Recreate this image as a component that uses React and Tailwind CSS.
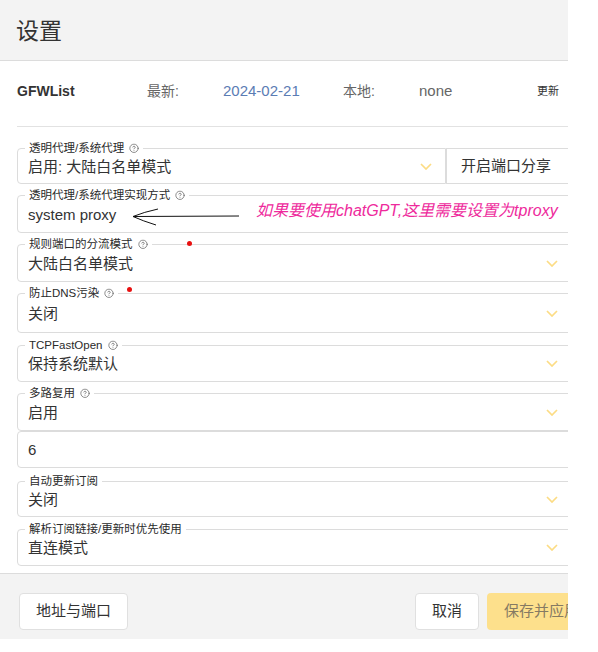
import React from "react";
import { CircleHelp } from "lucide-react";

function Chevron() {
  return (
    <svg width="12" height="7" viewBox="0 0 12 7" className="shrink-0">
      <path d="M1 1 L6 6 L11 1" stroke="#fcdc84" strokeWidth="1.7" fill="none" />
    </svg>
  );
}

function Label({ text, help }) {
  return (
    <div className="absolute left-[7px] top-0 -translate-y-[55%] bg-white px-[4px] flex items-center gap-[5px] text-[11.5px] leading-[14px] text-[#2a2a2a] whitespace-nowrap">
      <span>{text}</span>
      {help && <CircleHelp size={10} strokeWidth={1.6} color="#555" />}
    </div>
  );
}

function Field({ label, help = true, value, cls, chevron = true, children }) {
  return (
    <div className={`relative flex items-center justify-between border border-[#dcdcdc] rounded-[4px] pl-[10px] pr-[13px] bg-white ${cls}`}>
      {label && <Label text={label} help={help} />}
      <span className="text-[15px] text-[#333] leading-none">{value}</span>
      {chevron && <Chevron />}
      {children}
    </div>
  );
}

export default function App() {
  return (
    <div className="w-[598px] h-[652px] bg-white overflow-hidden font-['Liberation_Sans','Noto_Sans_CJK_SC',sans-serif]">
      <div className="w-[568px] overflow-hidden">
        <div className="w-[613px]">
          {/* Header */}
          <div className="h-[61px] bg-[#f3f3f3] border-b border-[#dcdcdc] flex items-center pl-[16px] pt-[3px]">
            <span className="text-[23px] text-[#333]">设置</span>
          </div>

          {/* Content */}
          <div className="pl-[17px] pr-[41px]">
            <div className="h-[66px] flex items-center border-b border-[#e2e2e2] pb-[4px]">
              <span className="w-[130px] text-[14px] font-bold text-[#333]">GFWList</span>
              <span className="w-[76px] text-[14px] text-[#666]">最新:</span>
              <span className="w-[120px] text-[15px] text-[#5b7cb4]">2024-02-21</span>
              <span className="w-[76px] text-[14px] text-[#666]">本地:</span>
              <span className="w-[118px] text-[15px] text-[#666]">none</span>
              <span className="text-[11px] text-[#333]">更新</span>
            </div>

            <div className="pt-[21px] pb-[7px]">
              {/* Row 1 */}
              <div className="flex h-[36px] mb-[11px]">
                <div className="relative flex-1 flex items-center justify-between border border-[#dcdcdc] rounded-l-[4px] pl-[10px] pr-[13px]">
                  <Label text="透明代理/系统代理" help />
                  <span className="text-[15px] text-[#333] leading-none">启用: 大陆白名单模式</span>
                  <Chevron />
                </div>
                <div className="w-[126px] flex items-center border border-l border-[#dcdcdc] pl-[14px] text-[15px] text-[#333]">
                  开启端口分享
                </div>
              </div>

              {/* Row 2 */}
              <Field label="透明代理/系统代理实现方式" value="system proxy" cls="h-[38px] mb-[11px]">
                <svg width="120" height="26" viewBox="0 0 120 26" className="absolute left-[110px] top-[8px]">
                  <path d="M111 12 L5 12.5" stroke="#111" strokeWidth="1" fill="none" />
                  <path d="M5 12.5 Q16 8 30 5" stroke="#111" strokeWidth="1" fill="none" />
                  <path d="M5 12.5 Q15 17 28 21" stroke="#111" strokeWidth="1" fill="none" />
                </svg>
                <span className="absolute left-[238px] top-[5px] leading-[20px] text-[16px] italic text-[#ee2a9c] bg-white pr-[1px] whitespace-nowrap">
                  如果要使用chatGPT,这里需要设置为tproxy
                </span>
              </Field>

              {/* Row 3 */}
              <Field label="规则端口的分流模式" value="大陆白名单模式" cls="h-[38px] mb-[11px]">
                <span className="absolute left-[169px] top-[-4px] w-[5px] h-[5px] rounded-full bg-[#e81010]" />
              </Field>

              {/* Row 4 */}
              <Field label="防止DNS污染" value="关闭" cls="h-[40px] mb-[12px]">
                <span className="absolute left-[109px] top-[-7px] w-[5px] h-[5px] rounded-full bg-[#e81010]" />
              </Field>

              {/* Row 5 */}
              <Field label="TCPFastOpen" value="保持系统默认" cls="h-[37px] mb-[11px]" />

              {/* Row 6 */}
              <Field label="多路复用" value="启用" cls="h-[38px]" />

              {/* Row 7 */}
              <Field value="6" chevron={false} cls="h-[37px] mb-[13px]" />

              {/* Row 8 */}
              <Field label="自动更新订阅" help={false} value="关闭" cls="h-[36px] mb-[12px]" />

              {/* Row 9 */}
              <Field label="解析订阅链接/更新时优先使用" help={false} value="直连模式" cls="h-[37px]" />
            </div>
          </div>

          {/* Footer */}
          <div className="h-[66px] bg-[#f3f3f3] border-t border-[#dcdcdc] flex items-start justify-between pt-[19px] pl-[19px] pr-[17px]">
            <button className="h-[37px] px-[16px] bg-white border border-[#e0e0e0] rounded-[4px] text-[15px] text-[#333]">
              地址与端口
            </button>
            <div className="flex gap-[8px]">
              <button className="h-[37px] px-[16px] bg-white border border-[#e0e0e0] rounded-[4px] text-[15px] text-[#333]">
                取消
              </button>
              <button className="h-[37px] w-[109px] px-[17px] bg-[#fde08c] rounded-[4px] text-[15px] text-[#857a63] text-left">
                保存并应用
              </button>
            </div>
          </div>
        </div>
      </div>
    </div>
  );
}
